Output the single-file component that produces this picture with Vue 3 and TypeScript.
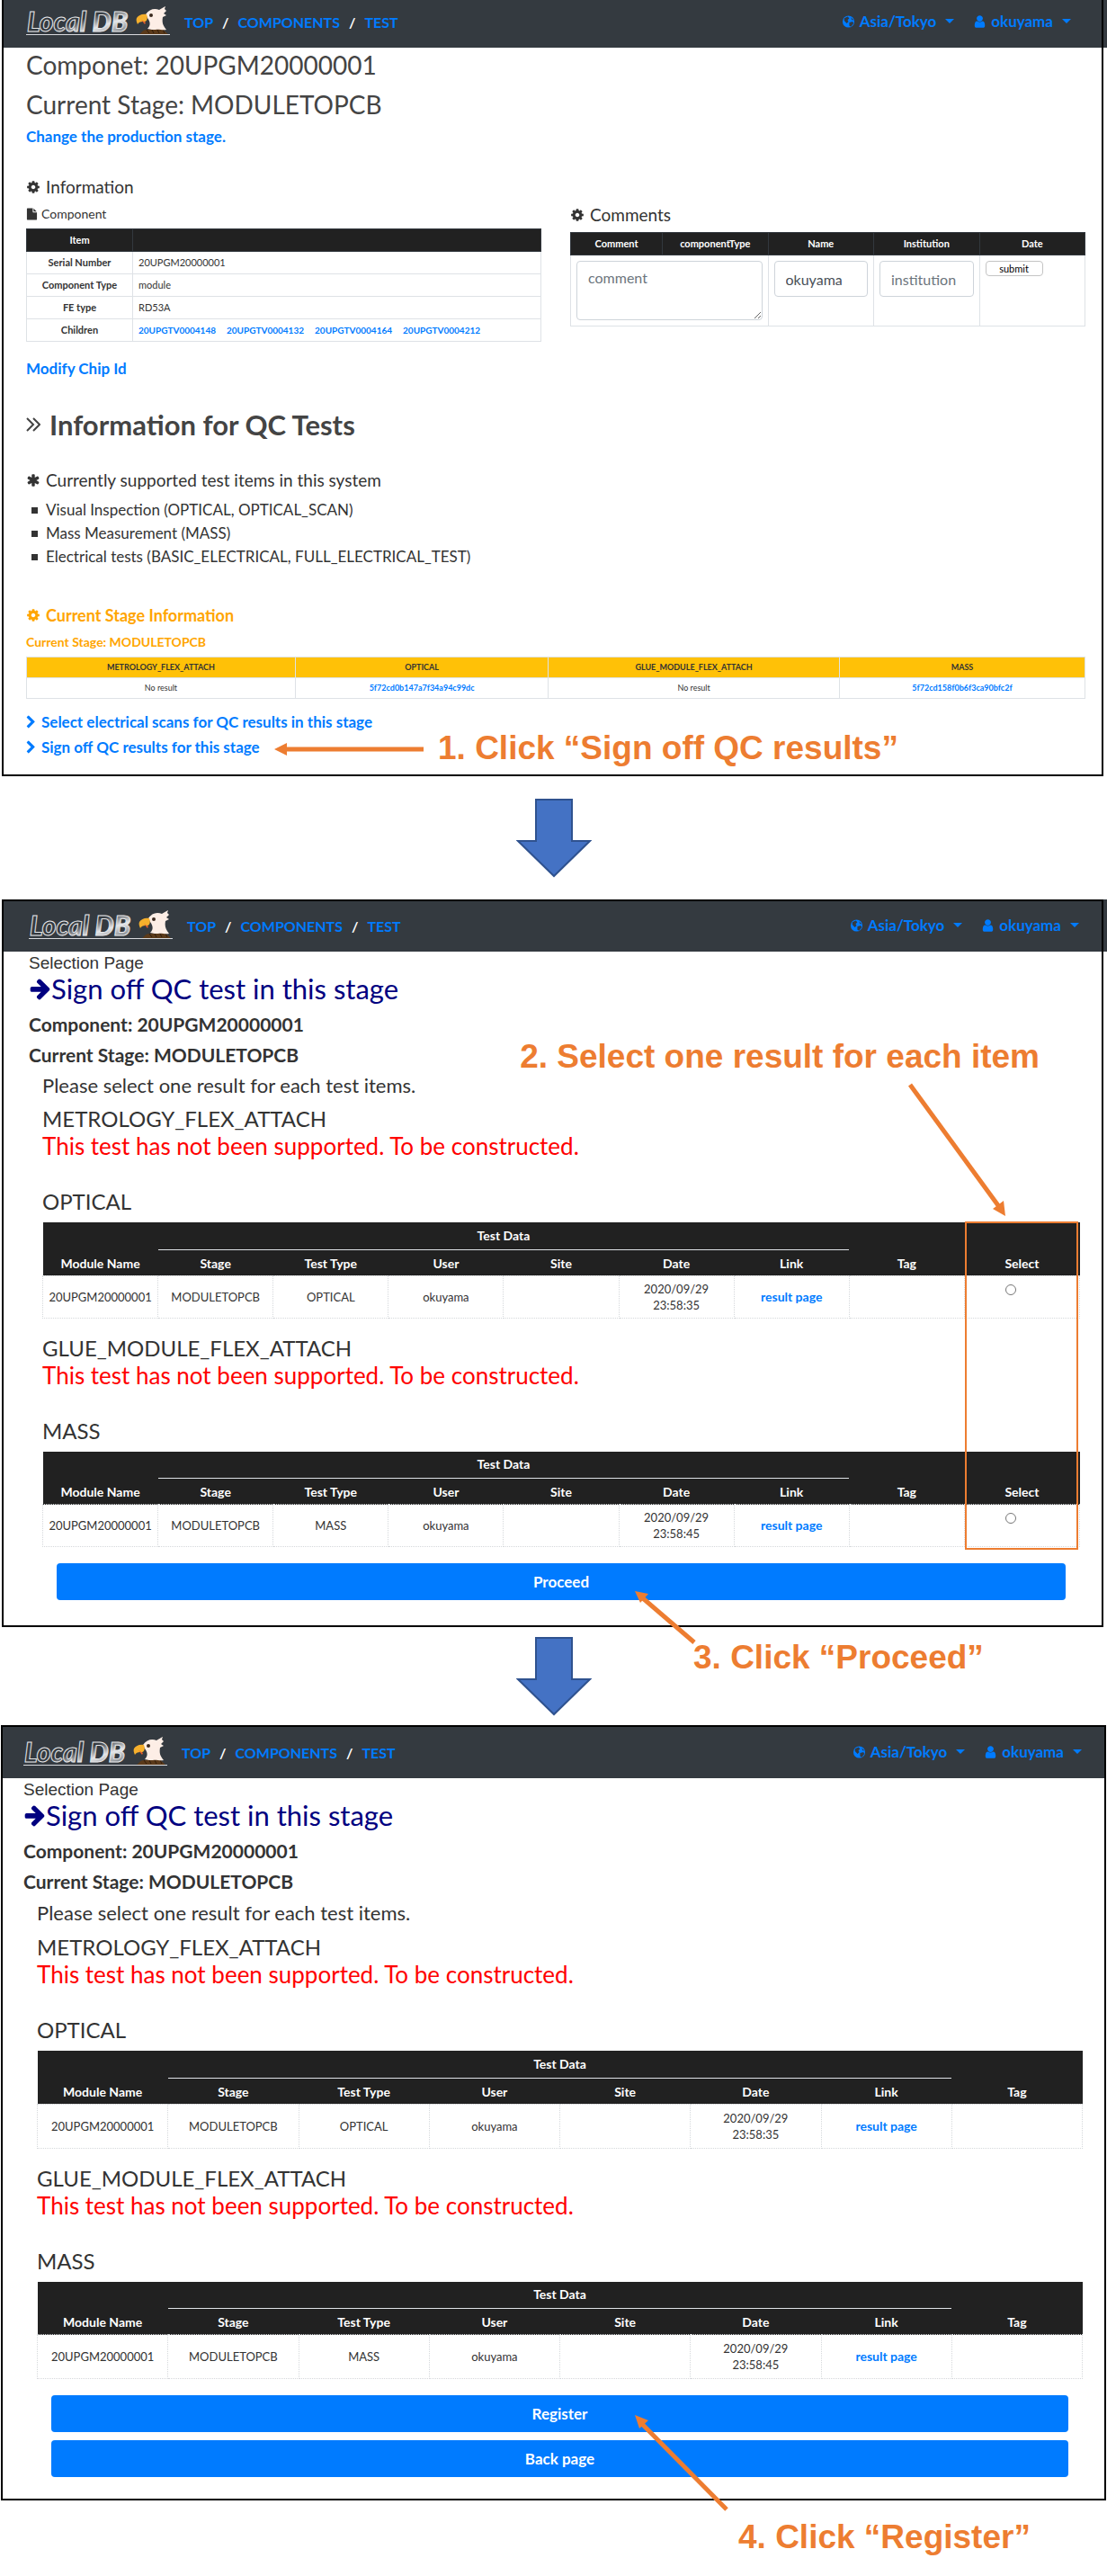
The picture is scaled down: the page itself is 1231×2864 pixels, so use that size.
<script setup lang="ts">
interface TestBlock {
  name: string
  date?: string
}
interface Shot {
  id: string
  kind: 'overview' | 'select'
  pick: boolean
  buttons: string[]
}

const shots: Shot[] = [
  { id: 'stage', kind: 'overview', pick: false, buttons: [] },
  { id: 'choose', kind: 'select', pick: true, buttons: ['Proceed'] },
  { id: 'confirm', kind: 'select', pick: false, buttons: ['Register', 'Back page'] },
]

const tests: TestBlock[] = [
  { name: 'METROLOGY_FLEX_ATTACH' },
  { name: 'OPTICAL', date: '23:58:35' },
  { name: 'GLUE_MODULE_FLEX_ATTACH' },
  { name: 'MASS', date: '23:58:45' },
]

const children = ['20UPGTV0004148', '20UPGTV0004132', '20UPGTV0004164', '20UPGTV0004212']
const dataColumns = ['Stage', 'Test Type', 'User', 'Site', 'Date', 'Link']

const icons = {
  cog: 'M1152 896q0-106-75-181t-181-75-181 75-75 181 75 181 181 75 181-75 75-181zm512-109v222q0 12-8 23t-20 13l-185 28q-19 54-39 91 35 50 107 138 10 12 10 25t-9 23q-27 37-99 108t-94 71q-12 0-26-9l-138-108q-44 23-91 38-16 136-29 186-7 28-36 28h-222q-14 0-24.5-8.5t-11.5-21.5l-28-184q-49-16-90-37l-141 107q-10 9-25 9-14 0-25-11-126-114-165-168-7-10-7-23 0-12 8-23 15-21 51-66.5t54-70.5q-27-50-41-99l-183-27q-13-2-21-12.5t-8-23.5v-222q0-12 8-23t19-13l186-28q14-46 39-92-40-57-107-138-10-12-10-24 0-10 9-23 26-36 98.5-107.5t94.5-71.5q13 0 26 10l138 107q44-23 91-38 16-136 29-186 7-28 36-28h222q14 0 24.5 8.5t11.5 21.5l28 184q49 16 90 37l142-107q9-9 24-9 13 0 25 10 129 119 165 170 7 8 7 22 0 12-8 23-15 21-51 66.5t-54 70.5q26 50 41 98l183 28q13 2 21 12.5t8 23.5z',
  file: 'M1152 512v-472q22 14 36 28l408 408q14 14 28 36h-472zm-128 32q0 40 28 68t68 28h544v1056q0 40-28 68t-68 28h-1344q-40 0-68-28t-28-68v-1600q0-40 28-68t68-28h800v544z',
  user: 'M1536 1399q0 109-62.5 187t-150.5 78h-854q-88 0-150.5-78t-62.5-187q0-85 8.5-160.5t31.5-152 58.5-131 94-89 134.5-34.5q131 128 313 128t313-128q76 0 134.5 34.5t94 89 58.5 131 31.5 152 8.5 160.5zm-256-887q0 159-112.5 271.5t-271.5 112.5-271.5-112.5-112.5-271.5 112.5-271.5 271.5-112.5 271.5 112.5 112.5 271.5z',
  asterisk: 'M1546 1050q46 26 59.5 77.5t-12.5 97.5l-64 110q-26 46-77.5 59.5t-97.5-12.5l-266-153v307q0 52-38 90t-90 38h-128q-52 0-90-38t-38-90v-307l-266 153q-46 26-97.5 12.5t-77.5-59.5l-64-110q-26-46-12.5-97.5t59.5-77.5l266-154-266-154q-46-26-59.5-77.5t12.5-97.5l64-110q26-46 77.5-59.5t97.5 12.5l266 153v-307q0-52 38-90t90-38h128q52 0 90 38t38 90v307l266-153q46-26 97.5-12.5t77.5 59.5l64 110q26 46 12.5 97.5t-59.5 77.5l-266 154z',
  chevron: 'M1363 877l-742 742q-19 19-45 19t-45-19l-166-166q-19-19-19-45t19-45l531-531-531-531q-19-19-19-45t19-45l166-166q19-19 45-19t45 19l742 742q19 19 19 45t-19 45z',
  arrow: 'M1600 960q0 54-37 91l-651 651q-39 37-91 37-51 0-90-37l-75-75q-38-38-38-91t38-91l293-293h-704q-52 0-84.5-37.5t-32.5-90.5v-128q0-53 32.5-90.5t84.5-37.5h704l-293-294q-38-36-38-90t38-90l75-75q38-38 90-38 53 0 91 38l651 651q37 35 37 90z',
}
</script>

<template>
  <main class="guide">
    <svg width="0" height="0" class="defs" aria-hidden="true">
      <defs>
        <linearGradient id="chrome" x1="0" y1="0" x2="1" y2="1" spreadMethod="repeat">
          <stop offset="0" stop-color="#343a40" />
          <stop offset="0.5" stop-color="#343a40" />
          <stop offset="0.7" stop-color="#e6e7e9" />
          <stop offset="1" stop-color="#4a5057" />
        </linearGradient>
      </defs>
    </svg>
    <template v-for="(shot, i) in shots" :key="shot.id">
      <section class="shot" :class="shot.id">
        <header class="bar">
          <svg class="logo" width="160" height="32" viewBox="0 0 160 32" role="img" aria-label="Local DB">
            <path d="M0 31.5H160" stroke="#d8dade" stroke-width="1" />
            <text class="logo-text" x="1" y="28">Local DB</text>
            <path d="M126 31c3-2 4-5 8-5l16-1c4 1 5 4 8 6z" fill="#5b3a1a" />
            <path d="M134 26l3 4M140 26l2 4M146 26l2 4M152 26l2 4" stroke="#2f1c0c" stroke-width="1" />
            <path d="M133 9c4-6 10-7 15-5 3-2 5-3 7-4l-1 3 2 2-3 3 3 2-4 2c-1 6 0 9 4 14-4 1-9-1-12 0-3 0-5 0-9-1 4-4 3-8 0-12z" fill="#fdeee6" />
            <path d="M134 9c-5-1-9 1-11 4-1 2 0 5 1 7 1-2 3-3 6-3 4 1 6-3 4-8z" fill="#f6b02c" />
            <path d="M128 15l5 3-1 2z" fill="#e8602c" />
            <circle cx="139" cy="10" r="2" fill="#3b2a20" />
          </svg>
          <nav class="crumbs" aria-label="Breadcrumb">
            <a href="#top">TOP</a><span>/</span><a href="#components">COMPONENTS</a><span>/</span><a href="#test">TEST</a>
          </nav>
          <div class="menus">
            <button type="button" class="menu">
              <svg class="icon" viewBox="0 0 16 16"><circle cx="8" cy="8" r="7" /><path d="M3 4l4-2 2 2-2 2 1 2-2 2-3-3zM9 9l4-1 1 2-3 4-2-1zM11 3l3 3-2 0z" fill="#343a40" /></svg>
              Asia/Tokyo<i class="caret"></i>
            </button>
            <button type="button" class="menu">
              <svg class="icon" viewBox="128 0 1536 1792"><path :d="icons.user" /></svg>
              okuyama<i class="caret"></i>
            </button>
          </div>
        </header>

        <div v-if="shot.kind === 'overview'" class="body">
          <h1 class="title">Componet: 20UPGM20000001</h1>
          <h1 class="title second">Current Stage: MODULETOPCB</h1>
          <p class="line change"><a href="#stage">Change the production stage.</a></p>

          <div class="columns">
            <div>
              <h2 class="sub"><svg class="icon" viewBox="0 0 1792 1792"><path :d="icons.cog" /></svg>Information</h2>
              <h3 class="small"><svg class="icon" viewBox="0 0 1792 1792"><path :d="icons.file" /></svg>Component</h3>
              <table class="info">
                <thead>
                  <tr><th>Item</th><th></th></tr>
                </thead>
                <tbody>
                  <tr><th>Serial Number</th><td>20UPGM20000001</td></tr>
                  <tr><th>Component Type</th><td>module</td></tr>
                  <tr><th>FE type</th><td>RD53A</td></tr>
                  <tr>
                    <th>Children</th>
                    <td><a v-for="c in children" :key="c" :href="'#' + c" class="child">{{ c }}</a></td>
                  </tr>
                </tbody>
              </table>
            </div>
            <div class="comments">
              <h2 class="sub"><svg class="icon" viewBox="0 0 1792 1792"><path :d="icons.cog" /></svg>Comments</h2>
              <table class="info form">
                <colgroup><col class="c1" /><col /><col /><col /><col /></colgroup>
                <thead>
                  <tr><th>Comment</th><th>componentType</th><th>Name</th><th>Institution</th><th>Date</th></tr>
                </thead>
                <tbody>
                  <tr>
                    <td colspan="2"><textarea aria-label="Comment" placeholder="comment"></textarea></td>
                    <td><input type="text" aria-label="Name" value="okuyama" /></td>
                    <td><input type="text" aria-label="Institution" placeholder="institution" /></td>
                    <td><button type="submit" class="submit">submit</button></td>
                  </tr>
                </tbody>
              </table>
            </div>
          </div>
          <p class="line modify"><a href="#chip">Modify Chip Id</a></p>

          <h1 class="qc">
            <svg width="16" height="18" viewBox="0 0 16 18" fill="none" stroke="currentColor" stroke-width="2"><path d="M1 2l7 7-7 7M8 2l7 7-7 7" /></svg>
            Information for QC Tests
          </h1>
          <h2 class="sub supported"><svg class="icon" viewBox="0 0 1792 1792"><path :d="icons.asterisk" /></svg>Currently supported test items in this system</h2>
          <ul class="items">
            <li>Visual Inspection (OPTICAL, OPTICAL_SCAN)</li>
            <li>Mass Measurement (MASS)</li>
            <li>Electrical tests (BASIC_ELECTRICAL, FULL_ELECTRICAL_TEST)</li>
          </ul>

          <h2 class="sub amber"><svg class="icon" viewBox="0 0 1792 1792"><path :d="icons.cog" /></svg>Current Stage Information</h2>
          <h3 class="small amber-line">Current Stage: MODULETOPCB</h3>
          <table class="stage-table">
            <colgroup><col class="s1" /><col class="s2" /><col class="s3" /><col /></colgroup>
            <thead>
              <tr><th>METROLOGY_FLEX_ATTACH</th><th>OPTICAL</th><th>GLUE_MODULE_FLEX_ATTACH</th><th>MASS</th></tr>
            </thead>
            <tbody>
              <tr>
                <td>No result</td>
                <td><a href="#optical">5f72cd0b147a7f34a94c99dc</a></td>
                <td>No result</td>
                <td><a href="#mass">5f72cd158f0b6f3ca90bfc2f</a></td>
              </tr>
            </tbody>
          </table>
          <p class="line go"><a href="#scans"><svg class="icon" viewBox="256 0 1280 1792"><path :d="icons.chevron" /></svg>Select electrical scans for QC results in this stage</a></p>
          <p class="line go"><a href="#signoff"><svg class="icon" viewBox="256 0 1280 1792"><path :d="icons.chevron" /></svg>Sign off QC results for this stage</a></p>
        </div>

        <form v-else class="body" @submit.prevent>
          <p class="page-name">Selection Page</p>
          <h1 class="signoff"><svg width="25" height="25" viewBox="64 80 1600 1700"><path :d="icons.arrow" /></svg>Sign off QC test in this stage</h1>
          <h2 class="meta">Component: 20UPGM20000001</h2>
          <h2 class="meta">Current Stage: MODULETOPCB</h2>
          <div class="tests">
            <p class="lead">Please select one result for each test items.</p>
            <template v-for="test in tests" :key="test.name">
              <h3 class="test-name">{{ test.name }}</h3>
              <p v-if="!test.date" class="missing">This test has not been supported. To be constructed.</p>
              <table v-else class="results">
                <thead>
                  <tr>
                    <th rowspan="2">Module Name</th>
                    <th colspan="6" class="group">Test Data</th>
                    <th rowspan="2">Tag</th>
                    <th v-if="shot.pick" rowspan="2">Select</th>
                  </tr>
                  <tr><th v-for="c in dataColumns" :key="c">{{ c }}</th></tr>
                </thead>
                <tbody>
                  <tr>
                    <td>20UPGM20000001</td>
                    <td>MODULETOPCB</td>
                    <td>{{ test.name }}</td>
                    <td>okuyama</td>
                    <td></td>
                    <td>2020/09/29<br />{{ test.date }}</td>
                    <td><a href="#result">result page</a></td>
                    <td></td>
                    <td v-if="shot.pick" class="pick"><input type="radio" :name="test.name" :aria-label="'Select ' + test.name" /></td>
                  </tr>
                </tbody>
              </table>
            </template>
            <div class="actions">
              <button v-for="b in shot.buttons" :key="b" type="submit" class="primary">{{ b }}</button>
            </div>
          </div>
        </form>

        <template v-if="shot.id === 'stage'">
          <svg class="pointer p1" width="166" height="14" viewBox="0 0 166 14"><path d="M166 7H12" /><path class="tip" d="M0 7L14 0V14z" /></svg>
          <p class="note n1">1. Click “Sign off QC results”</p>
        </template>
        <template v-if="shot.id === 'choose'">
          <div class="highlight"></div>
          <svg class="pointer p2" width="112" height="150" viewBox="0 0 112 150"><path d="M3 2L103 139" /><path class="tip" d="M109 148L95 140L107 131z" /></svg>
          <p class="note n2">2. Select one result for each item</p>
          <svg class="pointer p3" width="70" height="62" viewBox="0 0 70 62"><path d="M66 58L9 9" /><path class="tip" d="M0 1L15 4L6 14z" /></svg>
          <p class="note n3">3. Click “Proceed”</p>
        </template>
        <template v-if="shot.id === 'confirm'">
          <svg class="pointer p4" width="106" height="108" viewBox="0 0 106 108"><path d="M102 105L8 10" /><path class="tip" d="M0 0L15 6L5 15z" /></svg>
          <p class="note n4">4. Click “Register”</p>
        </template>
      </section>
      <div v-if="i < shots.length - 1" class="next" :class="'after-' + shot.id">
        <svg width="84" height="88" viewBox="0 0 84 88"><path d="M22 1H62V47H82L42 86L2 47H22z" fill="#4472c4" stroke="#2f528f" stroke-width="2" /></svg>
      </div>
    </template>
  </main>
</template>

<style>
body {
  margin: 0;
  background: #fff;
}
</style>

<style scoped>
.guide {
  font-family: Lato, "Open Sans", sans-serif;
  color: #333;
  padding-bottom: 86px;
  overflow: hidden;
}
.defs {
  position: absolute;
}
.shot {
  position: relative;
  margin: 0 4px 0 2px;
}
.shot.confirm {
  margin: 0 1px;
}
.shot::after {
  content: "";
  position: absolute;
  inset: 0;
  border: 2px solid #000;
  pointer-events: none;
}
.shot.stage::after {
  border-top: 0;
}
h1, h2, h3, p, ul {
  margin: 0;
  font-weight: 400;
}
a {
  color: #007bff;
  font-weight: 700;
  text-decoration: none;
}
.icon {
  fill: currentColor;
  flex: none;
}

/* Navigation bar */
.bar {
  display: flex;
  align-items: flex-end;
  height: 53px;
  margin-right: -4px;
  padding: 0 40px 14px 27px;
  box-sizing: border-box;
  background: #343a40;
}
.choose .bar {
  height: 58px;
  padding: 0 31px 14px 30px;
}
.confirm .bar {
  height: 59px;
  margin-right: 0;
  padding: 0 27px 14px 25px;
}
.logo {
  flex: none;
  overflow: visible;
}
.logo-text {
  font: italic 900 30px Lato, "Open Sans", sans-serif;
  fill: url(#chrome);
  stroke: #e6e7e9;
  stroke-width: 1px;
}
.crumbs {
  display: flex;
  gap: 10px;
  margin: 0 auto 2px 16px;
  font-size: 16px;
  line-height: 24px;
  font-weight: 700;
  color: #fff;
}
.menus {
  display: flex;
  gap: 21px;
  margin-bottom: 3px;
}
.menu {
  display: flex;
  align-items: center;
  padding: 0;
  border: 0;
  background: none;
  color: #007bff;
  font: 700 17px/24px Lato, "Open Sans", sans-serif;
}
.menu .icon {
  width: 15px;
  height: 16px;
  margin-right: 5px;
}
.caret {
  margin: 0 0 2px 10px;
  border: 5px solid transparent;
  border-top-color: currentColor;
  border-bottom: 0;
}

/* Stage overview */
.body {
  display: block;
  padding: 1px 20px 20px 27px;
}
.title {
  font-size: 28px;
  line-height: 36px;
  color: #444;
}
.title.second {
  margin-top: 8px;
}
.line {
  font-size: 17px;
  line-height: 24px;
}
.change {
  margin-top: 6px;
}
.columns {
  display: grid;
  grid-template-columns: 1fr 1fr;
  gap: 32px;
  margin-top: 30px;
}
.comments {
  padding-top: 31px;
}
.sub {
  display: flex;
  align-items: center;
  gap: 6px;
  font-size: 19px;
  line-height: 28px;
}
.sub .icon {
  width: 16px;
  height: 16px;
}
.small {
  display: flex;
  align-items: center;
  gap: 4px;
  margin: 4px 0;
  font-size: 14px;
  line-height: 24px;
}
.small .icon {
  width: 13px;
  height: 14px;
}
table {
  width: 100%;
  border-collapse: collapse;
  table-layout: fixed;
}
.info {
  font-size: 11px;
  line-height: 16px;
}
.info th,
.info td {
  height: 25px;
  box-sizing: border-box;
  padding: 3px 6px;
  border: 1px solid #dee2e6;
}
.info thead th {
  background: #212121;
  color: #fff;
  border-color: #32383e;
}
.info th:first-child {
  width: 118px;
}
.child {
  margin-right: 12px;
  font-size: 10px;
}
.info.form .c1,
.info.form th:first-child {
  width: 102px;
}
.info.form {
  margin-top: 5px;
}
.info.form td {
  height: 77px;
  padding: 6px;
  vertical-align: top;
}
.info.form textarea,
.info.form input {
  display: block;
  width: 100%;
  height: 40px;
  box-sizing: border-box;
  padding: 6px 12px;
  border: 1px solid #ced4da;
  border-radius: 4px;
  background: #fff;
  color: #495057;
  font: 400 16px/24px Lato, "Open Sans", sans-serif;
}
.info.form textarea {
  height: 66px;
}
.info.form ::placeholder {
  color: #6c757d;
  opacity: 1;
}
.submit {
  display: block;
  width: 64px;
  height: 17px;
  padding: 0;
  border: 1px solid #c4c4c4;
  border-radius: 4px;
  background: #fff;
  color: #000;
  font: 400 11px/14px Lato, "Open Sans", sans-serif;
}
.modify {
  margin-top: 18px;
}
.qc {
  display: flex;
  align-items: center;
  gap: 10px;
  margin-top: 32px;
  font-size: 31px;
  font-weight: 700;
  line-height: 36px;
  color: #444;
}
.supported {
  margin-top: 30px;
}
.items {
  margin-top: 6px;
  padding-left: 6px;
  list-style: none;
  font-size: 17px;
  line-height: 26px;
}
.items li {
  display: flex;
  align-items: center;
  gap: 9px;
}
.items li::before {
  content: "";
  width: 7px;
  height: 7px;
  background: currentColor;
}
.amber {
  margin-top: 38px;
  font-size: 18px;
}
.amber,
.amber-line {
  color: #ffa500;
  font-weight: 700;
}
.stage-table {
  font-size: 9px;
  line-height: 12px;
  text-align: center;
}
.stage-table .s1 {
  width: 25.4%;
}
.stage-table .s2 {
  width: 23.9%;
}
.stage-table .s3 {
  width: 27.5%;
}
.stage-table th,
.stage-table td {
  height: 23px;
  box-sizing: border-box;
  padding: 0;
  border: 1px solid #dee2e6;
}
.stage-table th {
  background: #ffc107;
}
.go {
  margin-top: 4px;
}
.stage-table + .go {
  margin-top: 14px;
}
.go a {
  display: flex;
  align-items: center;
  gap: 6px;
  width: fit-content;
}
.go .icon {
  width: 11px;
  height: 16px;
}

/* Selection pages */
.choose .body {
  padding: 2px 26px 30px 30px;
}
.confirm .body {
  padding: 2px 26px 26px 25px;
}
.page-name {
  font-family: "Liberation Sans", sans-serif;
  font-size: 19px;
  line-height: 22px;
}
.signoff {
  display: flex;
  align-items: center;
  font-size: 31px;
  line-height: 34px;
  color: #000080;
}
.signoff svg {
  fill: currentColor;
}
.meta {
  margin-top: 4px;
  font-size: 21px;
  font-weight: 700;
  line-height: 30px;
}
.signoff + .meta {
  margin-top: 8px;
}
.tests {
  margin: 4px 0 0 15px;
}
.confirm .tests {
  margin-top: 5px;
}
.lead {
  margin-bottom: 7px;
  font-size: 22px;
  line-height: 30px;
}
.confirm .lead {
  margin-bottom: 8px;
}
.test-name {
  font-size: 24px;
  line-height: 30px;
}
.missing {
  margin-bottom: 32px;
  font-size: 26px;
  line-height: 30px;
  color: #f00;
}
.results {
  margin: 8px 0 18px;
  font-size: 13px;
  line-height: 18px;
  text-align: center;
}
.results thead {
  background: #212121;
  color: #fff;
  font-size: 14px;
}
.results th {
  height: 29px;
  box-sizing: border-box;
  padding: 0 0 2px;
  vertical-align: bottom;
}
.results th:not(.group) {
  padding-bottom: 4px;
}
.results .group {
  height: 30px;
  padding-bottom: 6px;
  border-bottom: 1px solid #dee2e6;
}
.results td {
  height: 47px;
  box-sizing: border-box;
  padding: 0;
  border: 1px dotted #d5d8db;
}
.confirm .results td {
  height: 49px;
}
.results td a {
  font-size: 14px;
}
.results .pick {
  vertical-align: top;
}
.pick input {
  display: block;
  width: 12px;
  height: 12px;
  margin: 9px auto 0 45px;
}
.actions {
  display: flex;
  flex-direction: column;
  gap: 9px;
  margin: 0 16px;
}
.primary {
  height: 41px;
  border: 0;
  border-radius: 4px;
  background: #007bff;
  color: #fff;
  font: 700 17px/24px Lato, "Open Sans", sans-serif;
}

/* Arrows and step notes laid over the pages */
.next {
  display: flex;
  align-items: center;
  justify-content: center;
}
.after-stage {
  height: 137px;
}
.after-choose {
  height: 109px;
}
.note,
.pointer,
.highlight {
  position: absolute;
  z-index: 1;
}
.note {
  font: 700 37px/44px "Liberation Sans", Arial, sans-serif;
  color: #ed7d31;
  white-space: nowrap;
}
.pointer {
  fill: none;
  stroke: #ed7d31;
  stroke-width: 5px;
}
.pointer .tip {
  fill: #ed7d31;
  stroke: none;
}
.highlight {
  top: 358px;
  right: 28px;
  width: 126px;
  height: 365px;
  box-sizing: border-box;
  border: 2px solid #ed7d31;
}
.p1 {
  left: 303px;
  top: 826px;
}
.n1 {
  left: 485px;
  top: 810px;
}
.p2 {
  right: 106px;
  top: 204px;
}
.n2 {
  right: 71px;
  top: 153px;
}
.p3 {
  left: 704px;
  top: 768px;
}
.n3 {
  left: 769px;
  top: 821px;
}
.p4 {
  left: 705px;
  top: 767px;
}
.n4 {
  left: 820px;
  top: 881px;
}
</style>
